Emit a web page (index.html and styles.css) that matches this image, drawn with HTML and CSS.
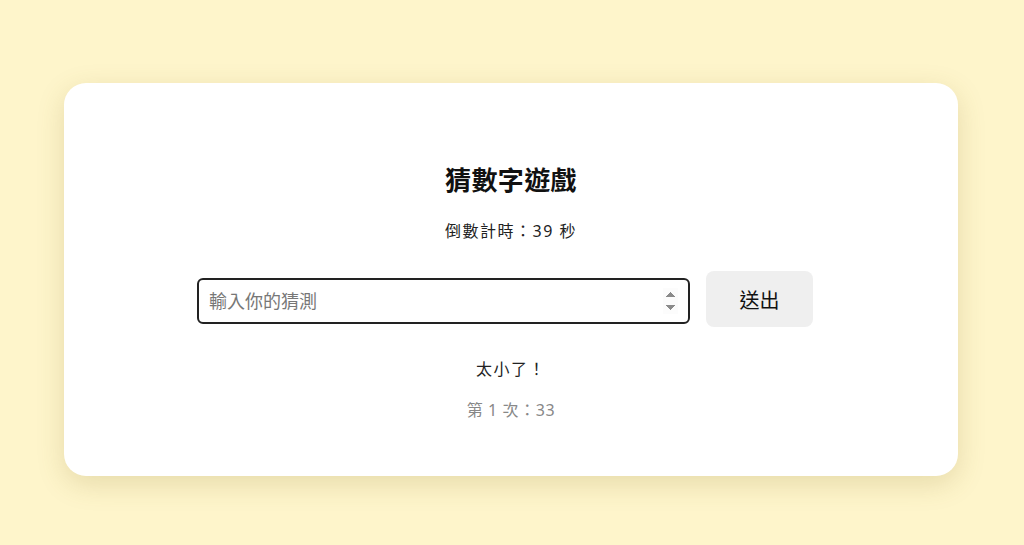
FILE: index.html
```html
<!DOCTYPE html>
<html lang="zh-Hant">
<head>
  <meta charset="UTF-8">
  <meta name="viewport" content="width=device-width, initial-scale=1.0">
  <title>猜數字遊戲</title>
  <link rel="stylesheet" href="styles.css">
</head>
<body>
  <div class="card">
    <h1>猜數字遊戲</h1>
    <p class="timer">倒數計時：<span id="seconds">39</span> 秒</p>
    <div class="guess-row">
      <input type="number" id="guess" placeholder="輸入你的猜測" autofocus>
      <button id="submit">送出</button>
    </div>
    <p class="result">太小了！</p>
    <ul class="history">
      <li>第 1 次：33</li>
    </ul>
  </div>
</body>
</html>
```

FILE: styles.css
```css
* {
  box-sizing: border-box;
  font-family: 'Noto Sans', 'Noto Sans CJK TC', sans-serif;
  text-spacing-trim: space-all;
}
body {
  margin: 0;
  padding: 83px 2px 69px 0;
  background-color: #fef5cb;
}
.card {
  width: 894px;
  height: 393px;
  margin: 0 auto;
  background: white;
  border-radius: 22px;
  box-shadow: 0 8px 28px rgba(120, 100, 20, 0.18);
  padding-top: 78px;
  text-align: center;
}
h1 {
  margin: 0;
  font-size: 26px;
  line-height: 38px;
  letter-spacing: 0.4px;
  color: #111;
}
.timer {
  margin: 20px 0 0;
  font-size: 16px;
  line-height: 24px;
  letter-spacing: 1.5px;
  color: #222;
}
.guess-row {
  display: flex;
  justify-content: center;
  align-items: center;
  gap: 16px;
  margin-top: 28px;
  padding-right: 12px;
}
.guess-row input {
  width: 493px;
  height: 46px;
  margin-top: 4px;
  padding: 0 10px;
  border: 2px solid #222;
  border-radius: 6px;
  font-size: 18px;
  color: #222;
  outline: none;
}
.guess-row input::placeholder {
  color: #777;
}
.guess-row input::-webkit-inner-spin-button {
  opacity: 1;
  height: 26px;
}
.guess-row button {
  width: 107px;
  height: 56px;
  border: none;
  border-radius: 8px;
  background-color: #efefef;
  font-size: 20px;
  color: #111;
  cursor: pointer;
}
.result {
  margin: 30px 0 0;
  font-size: 16px;
  line-height: 24px;
  letter-spacing: 1.5px;
  color: #222;
}
.history {
  list-style: none;
  padding: 0;
  margin: 17px 0 0;
  font-size: 16px;
  line-height: 24px;
  letter-spacing: 0.6px;
  color: #888;
}
```
